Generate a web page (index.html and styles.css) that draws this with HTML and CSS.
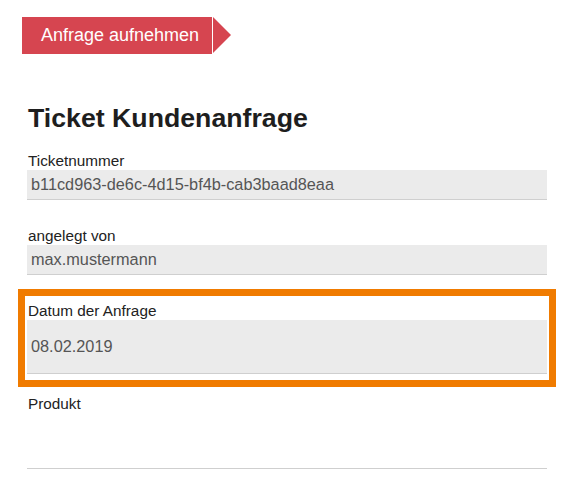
FILE: index.html
```html
<!DOCTYPE html>
<html lang="de">
<head>
    <meta charset="UTF-8">
    <meta name="viewport" content="width=device-width, initial-scale=1.0">
    <title>Ticket Kundenanfrage</title>
    <link rel="stylesheet" href="styles.css">
</head>
<body>
    <div class="page">
        <div class="step">
            <span class="step-label">Anfrage aufnehmen</span>
            <span class="step-arrow"></span>
        </div>

        <h1>Ticket Kundenanfrage</h1>

        <div class="form">
            <div class="field">
                <label>Ticketnummer</label>
                <div class="value">b11cd963-de6c-4d15-bf4b-cab3baad8eaa</div>
            </div>

            <div class="field">
                <label>angelegt von</label>
                <div class="value">max.mustermann</div>
            </div>

            <div class="field highlight">
                <label>Datum der Anfrage</label>
                <div class="value tall">08.02.2019</div>
            </div>

            <div class="field after-highlight">
                <label>Produkt</label>
                <div class="value tall empty"></div>
            </div>
        </div>
    </div>
</body>
</html>
```

FILE: styles.css
```css
body {
    margin: 0;
    padding: 0;
    font-family: 'Liberation Sans', Arial, sans-serif;
    color: #222;
    background: #fff;
}

.page {
    padding: 17px 28px 0 27px;
}

/* Schritt-Pfeil oben */
.step {
    display: flex;
    align-items: stretch;
    margin-left: -5px;
    height: 37px;
}

.step-label {
    display: flex;
    align-items: center;
    width: 190px;
    padding-left: 19px;
    box-sizing: border-box;
    background: #d64550;
    color: #fff;
    font-size: 18px;
}

.step-arrow {
    width: 0;
    height: 0;
    margin-left: 1px;
    border-top: 18.5px solid transparent;
    border-bottom: 18.5px solid transparent;
    border-left: 18px solid #d64550;
}

h1 {
    font-size: 26.7px;
    font-weight: bold;
    line-height: 32px;
    margin: 48px 0 0 1px;
    color: #1e1e1e;
}

.form {
    margin-top: 17px;
}

.field label {
    display: block;
    font-size: 15.3px;
    line-height: 19px;
    padding-left: 1px;
    color: #222;
}

.field + .field {
    margin-top: 26px;
}

.value {
    display: flex;
    align-items: center;
    height: 29px;
    padding-left: 4px;
    background: #ebebeb;
    border-bottom: 1px solid #cfcfcf;
    font-size: 16.3px;
    color: #555;
}

.value.tall {
    height: 53px;
}

.value.empty {
    background: #fff;
    margin-top: 2px;
}

/* orange Markierung */
.field.highlight {
    margin: 14px -9px 0;
    padding: 5px 2px 6px;
    border: 7px solid #f07b00;
}

.field.after-highlight {
    margin-top: 7px;
}
```
